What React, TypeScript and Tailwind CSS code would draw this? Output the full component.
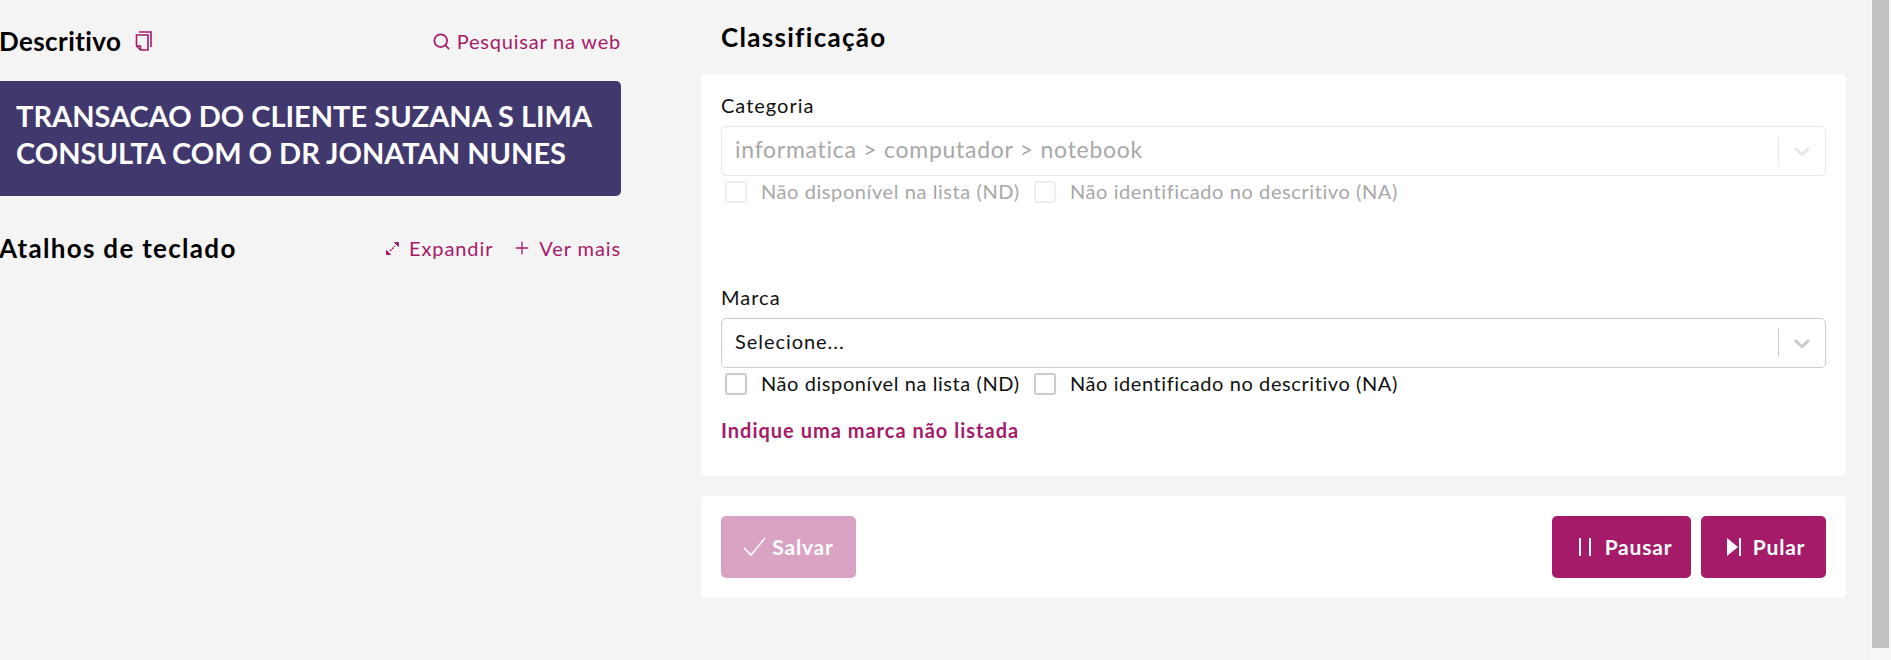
import { Plus, Search } from "lucide-react";

const CopyIcon = () => (
  <svg width="17" height="20" viewBox="0 0 17 20" fill="none" stroke="#a61b69" strokeWidth="1.6">
    <path d="M4 1h12v15" />
    <path d="M1.5 4h11.5v15H5.5l-4-4z" />
    <path d="M1.5 15h4v4" />
  </svg>
);

const ExpandIcon = () => (
  <svg width="15" height="15" viewBox="0 0 15 15" fill="#a61b69" stroke="#a61b69" strokeWidth="1.5">
    <path d="M5 10l5-5" strokeDasharray="2 1" />
    <path d="M9.5 1.5h4v4z" strokeWidth="1" />
    <path d="M1.5 9.5v4h4z" strokeWidth="1" />
  </svg>
);

const Chevron = ({ color }: { color: string }) => (
  <svg width="26" height="26" viewBox="0 0 20 20" fill={color}>
    <path d="M4.516 7.548c.436-.446 1.043-.481 1.576 0L10 11.295l3.908-3.747c.533-.481 1.141-.446 1.574 0 .436.445.408 1.197 0 1.615-.406.418-4.695 4.502-4.695 4.502a1.095 1.095 0 0 1-1.576 0S4.924 9.581 4.516 9.163c-.409-.418-.436-1.17 0-1.615z" />
  </svg>
);

const Field = ({ label, value, disabled }: { label: string; value: string; disabled?: boolean }) => (
  <div>
    <div className="h-[20px] text-[20px] leading-[18px] tracking-[1px] text-[#111]">{label}</div>
    <div
      className={`mt-[10px] flex h-[50px] items-center rounded-[5px] border bg-white pl-[13px] ${
        disabled ? "border-[#e8e8e8] bg-[#fdfdfd] text-[#a8a8a8]" : "border-[#cccccc] text-[#111]"
      }`}
    >
      <span className={`flex-1 pb-[4px] ${disabled ? "text-[23px] tracking-[0.73px]" : "text-[20px] tracking-[0.95px]"}`}>{value}</span>
      <div className={`h-[28px] w-px ${disabled ? "bg-[#e8e8e8]" : "bg-[#cccccc]"}`} />
      <div className="flex w-[46px] justify-center">
        <Chevron color={disabled ? "#e8e8e8" : "#cccccc"} />
      </div>
    </div>
  </div>
);

const Check = ({ label, disabled, width }: { label: string; disabled?: boolean; width: string }) => (
  <div className={`flex items-center ${width}`}>
    <div className={`h-[22px] w-[22px] rounded-[3px] border-2 bg-white ${disabled ? "border-[#eeeeee]" : "border-[#cccccc]"}`} />
    <span className={`ml-[14px] whitespace-nowrap pb-[2px] text-[20px] tracking-[0.58px] ${disabled ? "text-[#a8a8a8]" : "text-[#111]"}`}>{label}</span>
  </div>
);

const Checks = ({ disabled }: { disabled?: boolean }) => (
  <div className="mt-[5px] flex h-[22px] pl-[4px]">
    <Check label="Não disponível na lista (ND)" disabled={disabled} width="w-[309px]" />
    <Check label="Não identificado no descritivo (NA)" disabled={disabled} width="w-[380px]" />
  </div>
);

const Btn = ({ children, className }: { children: React.ReactNode; className: string }) => (
  <button className={`flex h-[62px] items-center justify-center rounded-[5px] text-[21px] font-bold tracking-[0.8px] text-white ${className}`}>
    {children}
  </button>
);

export default function App() {
  return (
    <div className="flex h-[660px] w-[1891px] overflow-hidden bg-[#f4f4f4] font-['Lato',sans-serif]">
      {/* descritivo */}
      <div className="-ml-[4px] w-[625px] shrink-0 pt-[29px]">
        <div className="flex h-[24px] items-center justify-between">
          <div className="flex items-center pl-[3px]">
            <h2 className="text-[26px] font-bold leading-[24px] tracking-[0.4px] text-black">Descritivo</h2>
            <span className="ml-[14px]">
              <CopyIcon />
            </span>
          </div>
          <a className="flex items-center text-[20px] tracking-[0.8px] text-[#a61b69]">
            <Search size={19} strokeWidth={2.2} className="mr-[6px]" />
            Pesquisar na web
          </a>
        </div>
        <div className="mt-[28px] flex h-[115px] flex-col justify-center rounded-r-[5px] bg-[#41386e] pb-[9px] pl-[20px] text-[29px] font-bold leading-[37px] text-white">
          <div>TRANSACAO DO CLIENTE SUZANA S LIMA</div>
          <div>CONSULTA COM O DR JONATAN NUNES</div>
        </div>
        <div className="mt-[40px] flex h-[24px] items-center justify-between">
          <h2 className="pl-[3px] text-[26px] font-bold leading-[24px] tracking-[1.3px] text-black">Atalhos de teclado</h2>
          <div className="flex items-center text-[20px] tracking-[0.9px] text-[#a61b69]">
            <ExpandIcon />
            <span className="ml-[9px]">Expandir</span>
            <Plus size={20} strokeWidth={1.6} className="ml-[19px] mr-[7px]" />
            <span>Ver mais</span>
          </div>
        </div>
      </div>

      {/* classificacao */}
      <div className="ml-[80px] w-[1145px] shrink-0 pt-[25px]">
        <h2 className="h-[24px] pl-[20px] text-[26px] font-bold leading-[24px] tracking-[1.3px] text-black">Classificação</h2>
        <div className="mt-[25px] h-[402px] rounded-[5px] bg-white px-[20px] pt-[22px]">
          <Field label="Categoria" value="informatica > computador > notebook" disabled />
          <Checks disabled />
          <div className="h-[85px]" />
          <Field label="Marca" value="Selecione..." />
          <Checks />
          <a className="mt-[25px] block text-[20px] font-bold leading-[20px] tracking-[1px] text-[#a61b69]">Indique uma marca não listada</a>
        </div>
        <div className="mt-[20px] flex h-[102px] items-center justify-between rounded-[5px] bg-white px-[20px]">
          <Btn className="w-[135px] bg-[#dba3c3]">
            <svg width="24" height="20" viewBox="0 0 24 20" fill="none" stroke="white" strokeWidth="1.6" className="mr-[5px]">
              <path d="M1 11l7 7L22 1" />
            </svg>
            Salvar
          </Btn>
          <div className="flex gap-[10px]">
            <Btn className="w-[139px] bg-[#a61b69] pl-[8px]">
              <svg width="12" height="18" viewBox="0 0 12 18" fill="white" className="mr-[14px]">
                <rect x="0" y="0" width="2" height="18" />
                <rect x="10" y="0" width="2" height="18" />
              </svg>
              Pausar
            </Btn>
            <Btn className="w-[125px] bg-[#a61b69] pl-[5px]">
              <svg width="14" height="18" viewBox="0 0 14 18" fill="white" className="mr-[12px]">
                <path d="M0 0l11 9-11 9z" />
                <rect x="12" y="0" width="2" height="18" />
              </svg>
              Pular
            </Btn>
          </div>
        </div>
      </div>

      {/* barra de rolagem */}
      <div className="ml-[24px] flex h-[660px] flex-1 justify-start bg-[#f6f6f6] pl-[2px]">
        <div className="h-[648px] w-[17px] bg-[#c1c1c1]" />
      </div>
    </div>
  );
}
